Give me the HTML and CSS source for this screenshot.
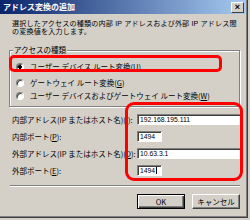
FILE: index.html
```html
<!DOCTYPE html>
<html lang="ja">
<head>
<meta charset="utf-8">
<link rel="stylesheet" href="styles.css">
</head>
<body>
<div class="window">
  <div class="titlebar">
    <span class="title">アドレス変換の追加</span>
    <span class="close">×</span>
  </div>
  <p class="desc">選択したアクセスの種類の内部 IP アドレスおよび外部 IP アドレス間<br>の変換値を入力します。</p>
  <fieldset class="group">
    <legend>アクセスの種類</legend>
    <div class="radio r1"><span class="dot checked"></span><span>ユーザー デバイス ルート変換(<u>U</u>)</span></div>
    <div class="radio r2"><span class="dot"></span><span>ゲートウェイ ルート変換(<u>G</u>)</span></div>
    <div class="radio r3"><span class="dot"></span><span>ユーザー デバイスおよびゲートウェイ ルート変換(<u>W</u>)</span></div>
  </fieldset>
  <div class="form">
    <div class="row"><span class="label">内部アドレス(IP またはホスト名)(<u>I</u>):</span><span class="input wide">192.168.195.111</span></div>
    <div class="row"><span class="label">内部ポート(<u>P</u>):</span><span class="input narrow">1494</span></div>
    <div class="row"><span class="label">外部アドレス(IP またはホスト名)(<u>D</u>):</span><span class="input wide">10.63.3.1</span></div>
    <div class="row last"><span class="label">外部ポート(<u>E</u>):</span><span class="input narrow">1494<span class="caret"></span></span></div>
  </div>
  <div class="sep"></div>
  <div class="buttons">
    <button class="btn default">OK</button>
    <button class="btn">キャンセル</button>
  </div>
  <div class="mark mark1"></div>
  <div class="mark mark2"></div>
</div>
</body>
</html>
```

FILE: styles.css
```css
html, body {
  margin: 0;
  padding: 0;
  background: #d4d0c8;
}
.window {
  position: relative;
  width: 248px;
  height: 218px;
  box-sizing: border-box;
  background: #d4d0c8;
  border-right: 1px solid #404040;
  border-bottom: 1px solid #404040;
  box-shadow: inset -1px -1px 0 #808080;
  font-family: "Noto Sans CJK JP", sans-serif;
  font-size: 7.5px;
  color: #000;
  overflow: hidden;
}
.titlebar {
  height: 14px;
  margin-right: 1px;
  background: linear-gradient(to right, #0a246a, #a6caf0);
  display: flex;
  align-items: center;
  justify-content: space-between;
}
.title {
  color: #fff;
  font-weight: bold;
  font-size: 8px;
  line-height: 14px;
  padding-left: 3px;
}
.close {
  width: 11px;
  height: 9px;
  margin-right: 2px;
  background: #d4d0c8;
  border: 1px solid;
  border-color: #fff #404040 #404040 #fff;
  box-sizing: content-box;
  font-family: "Liberation Sans", sans-serif;
  font-weight: bold;
  font-size: 9px;
  line-height: 9px;
  text-align: center;
  color: #000;
}
.desc {
  margin: 6px 0 0 12px;
  font-family: "Liberation Sans", "Noto Sans CJK JP", sans-serif;
  font-size: 7.1px;
  letter-spacing: 0.15px;
  line-height: 8px;
  white-space: nowrap;
}
.group {
  margin: 10px 0 0 9px;
  padding: 1px 0 4px 6px;
  width: 231px;
  box-sizing: border-box;
  border: 1px solid #808080;
  box-shadow: inset 1px 1px 0 #fff, 1px 1px 0 #fff;
  min-width: 0;
}
.group legend {
  padding: 0 1px;
  margin-left: -3px;
  line-height: 8px;
  background: #d4d0c8;
}
.radio {
  display: flex;
  align-items: center;
  height: 13px;
  gap: 6px;
  white-space: nowrap;
}
.radio.r1 { margin-top: 5px; }
.radio.r2 { margin-top: 3px; }
.dot {
  width: 8px;
  height: 8px;
  box-sizing: border-box;
  border-radius: 50%;
  background: #fff;
  border: 1px solid;
  border-color: #808080 #fff #fff #808080;
  box-shadow: inset 1px 1px 0 #404040;
  flex: none;
}
.dot.checked {
  background: radial-gradient(circle, #000 0 1.6px, #fff 2px);
}
.form {
  margin: 6px 0 0 12px;
}
.row {
  display: flex;
  align-items: center;
  height: 13px;
  margin-bottom: 4px;
}
.row.last {
  margin-top: 2px;
  margin-bottom: 0;
}
.label {
  width: 125px;
  flex: none;
  white-space: nowrap;
}
.input {
  height: 11px;
  box-sizing: border-box;
  background: #fff;
  border: 1px solid;
  border-color: #808080 #fff #fff #808080;
  box-shadow: inset 1px 1px 0 #404040;
  font-family: "Liberation Sans", sans-serif;
  font-size: 6.8px;
  line-height: 9px;
  padding-left: 2px;
  display: flex;
  align-items: center;
}
.input.wide { width: 104px; }
.input.narrow { width: 25px; }
.caret {
  display: inline-block;
  width: 1px;
  height: 7px;
  background: #000;
  margin-left: 1px;
}
.sep {
  margin: 8px 0 0 10px;
  width: 230px;
  height: 1px;
  background: #808080;
  border-bottom: 1px solid #fff;
}
.buttons {
  display: flex;
  gap: 7px;
  margin: 7px 0 0 137px;
}
.btn {
  width: 48px;
  height: 15px;
  margin: 0;
  padding: 0;
  background: #d4d0c8;
  border: 1px solid;
  border-color: #fff #404040 #404040 #fff;
  box-shadow: inset -1px -1px 0 #808080;
  font-family: "Noto Sans CJK JP", sans-serif;
  font-size: 7.5px;
  line-height: 12px;
  color: #000;
}
.btn.default {
  border-color: #000;
  box-shadow: inset 1px 1px 0 #fff, inset -1px -1px 0 #404040, inset -2px -2px 0 #808080;
}
.mark {
  position: absolute;
  border: 3px solid #f00;
  box-sizing: border-box;
}
.mark1 {
  left: 9px;
  top: 55px;
  width: 213px;
  height: 17px;
  border-radius: 5px;
}
.mark2 {
  left: 125px;
  top: 102px;
  width: 118px;
  height: 79px;
  border-radius: 9px;
}
```
